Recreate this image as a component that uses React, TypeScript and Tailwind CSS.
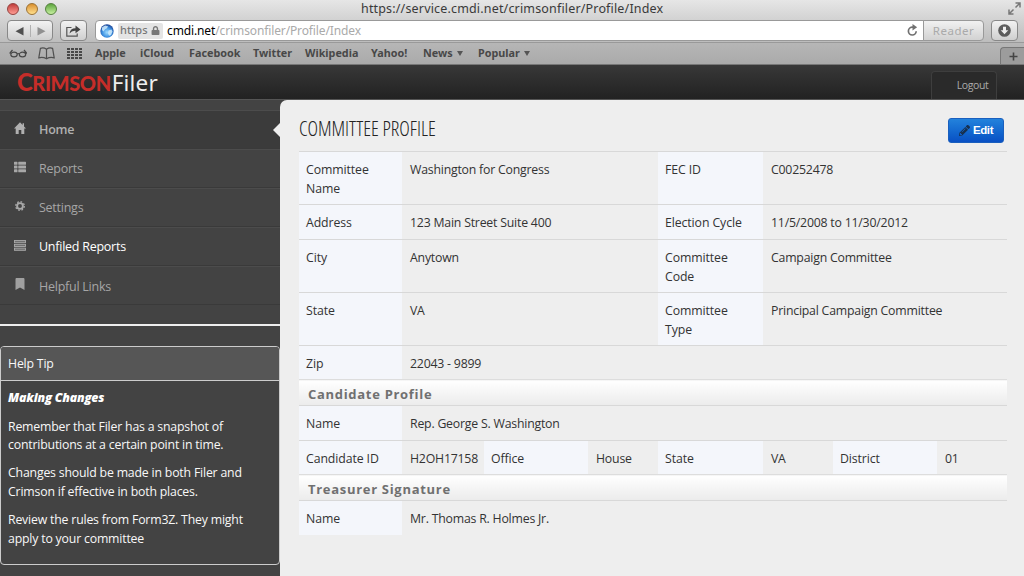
import type { ReactNode } from "react";
import { FaBookmark, FaLock, FaPencilAlt, FaThList } from "react-icons/fa";

const bookmarks = [
  { name: "Apple", width: "w-[45px]" },
  { name: "iCloud", width: "w-[49px]" },
  { name: "Facebook", width: "w-[64px]" },
  { name: "Twitter", width: "w-[52px]" },
  { name: "Wikipedia", width: "w-[66px]" },
  { name: "Yahoo!", width: "w-[52px]" },
  { name: "News", width: "w-[55px]", menu: true },
  { name: "Popular", width: "w-[60px]", menu: true },
];

const tips = [
  ["Remember that Filer has a snapshot of", "contributions at a certain point in time."],
  ["Changes should be made in both Filer and", "Crimson if effective in both places."],
  ["Review the rules from Form3Z. They might", "apply to your committee"],
];

function GlassesIcon() {
  return (
    <svg width="19" height="11" viewBox="0 0 19 11" fill="none" stroke="#484848" strokeWidth="1.2">
      <ellipse cx="5" cy="6.5" rx="3.2" ry="2.3" />
      <ellipse cx="13.500" cy="6.5" rx="3.2" ry="2.3" />
      <path d="M8.1 6q1.100-1 2.300 0M.5 5.200h2M16 5.200h2M1 5l2.500-3M17.500 5L15 2" />
    </svg>
  );
}

function BookIcon() {
  return (
    <svg width="17" height="13" viewBox="0 0 17 13" fill="none" stroke="#505050" strokeWidth="1.2">
      <path d="M8.5 2.2Q5.5.2 2.4 1.4L.8 10.8q4.2-1 7.7 1 3.5-2 7.7-1L14.6 1.4Q11.500.2 8.500 2.200V11.500" />
    </svg>
  );
}

function GridIcon() {
  return (
    <svg width="15" height="12" viewBox="0 0 15 12" fill="#484848">
      {[0, 3, 6, 9].map((y) =>
        [0, 4, 8, 12].map((x) => <rect key={`${x}-${y}`} x={x} y={y} width="3" height="2" />)
      )}
    </svg>
  );
}

function ShareIcon() {
  return (
    <svg width="15" height="12" viewBox="0 0 15 12" fill="none" stroke="#555" strokeWidth="1.2">
      <path d="M5.500 2.500H.8v8.700h10.400V8.500" />
      <path d="M3.500 8.500Q4.200 3.200 9.500 3.200V.5l5 4-5 3.800V5.800Q5.800 5.500 3.500 8.500z" fill="#444" stroke="none" />
    </svg>
  );
}

function Globe() {
  return (
    <svg width="14" height="14" viewBox="0 0 14 14">
      <defs>
        <radialGradient id="globe" cx="0.5" cy="0.6" r="0.6">
          <stop offset="0" stopColor="#9fdcff" />
          <stop offset="0.6" stopColor="#3b8fe0" />
          <stop offset="1" stopColor="#1b3f90" />
        </radialGradient>
      </defs>
      <circle cx="7" cy="7" r="6.7" fill="url(#globe)" />
      <path d="M2 3.500l3-2 3 .8-1 2-2 1-1.500 2.200L2 6zM8.500 6.500l3-1 1 2-1.500 3.500-2 .8-1-2.500z" fill="#d8f0fc" opacity=".8" />
    </svg>
  );
}

function ReloadIcon() {
  return (
    <svg width="11" height="13" viewBox="0 0 11 13" fill="none" stroke="#707070" strokeWidth="1.7">
      <path d="M6.500 3.200H5a3.900 3.900 0 1 0 4.200 4.100" />
      <path d="M5.500 0l4.600 3.200-4.600 3.300z" fill="#707070" stroke="none" />
    </svg>
  );
}

function FullscreenIcon() {
  return (
    <svg width="13" height="13" viewBox="0 0 13 13" fill="none" stroke="#777" strokeWidth="1.5">
      <path d="M7.500 1H12v4.500M12 1L7.500 5.500M5.500 12H1V7.500M1 12l4.500-4.500" />
    </svg>
  );
}

function HomeIcon() {
  return (
    <svg width="12" height="12" viewBox="0 0 12 12" fill="#b0b0b0">
      <path d="M6 .3L0 6.500h1.700V12h3V8h2.600v4h3V6.500H12L10 4.400V1.200H8.600V3z" />
    </svg>
  );
}

function GearIcon() {
  return (
    <svg width="10" height="10" viewBox="0 0 10 10" fill="none" stroke="#a8a8a8">
      <circle cx="5" cy="5" r="2.900" strokeWidth="1.900" />
      <circle cx="5" cy="5" r="4.300" strokeWidth="1.300" strokeDasharray="1.700 1.677" />
    </svg>
  );
}

function TasksIcon() {
  return (
    <svg width="12" height="11" viewBox="0 0 12 11" fill="#707070" stroke="#aaa" strokeWidth=".9">
      <rect x=".5" y=".5" width="11" height="2.200" />
      <rect x=".5" y="4.300" width="11" height="2.200" />
      <rect x=".5" y="8.100" width="11" height="2.200" />
    </svg>
  );
}

function Browser() {
  return (
    <header className="h-[65px] overflow-hidden border-b border-[#777] bg-linear-to-b from-[#e6e6e6] via-[#c6c6c6] to-[#a9a9a9] font-['Noto_Sans',sans-serif]">
      <div className="relative flex h-[19px] items-center">
        <div className="flex gap-[7px] pl-[7px] pb-[2px]">
          <span className="h-3 w-3 rounded-full border border-[#94423f] bg-linear-to-b from-[#c03c3c] to-[#ff9c94]" />
          <span className="h-3 w-3 rounded-full border border-[#9b7134] bg-linear-to-b from-[#d9902c] to-[#ffe08c]" />
          <span className="h-3 w-3 rounded-full border border-[#55803f] bg-linear-to-b from-[#5da63d] to-[#c6f0a0]" />
        </div>
        <h1 className="absolute left-[361px] top-0 whitespace-nowrap text-[12.5px] leading-[17px] tracking-[0.17px] text-[#3a3a3a]">
          https://service.cmdi.net/crimsonfiler/Profile/Index
        </h1>
        <span className="absolute top-[2px] right-[3px]">
          <FullscreenIcon />
        </span>
      </div>

      <div className="flex h-[23px] items-center pl-[7px]">
        <div className="flex h-[21px] w-[46px] items-center rounded-[4px] border border-[#888] bg-linear-to-b from-[#f2f2f2] to-[#cfcfcf]">
          <svg width="44" height="18" viewBox="0 0 44 18">
            <path d="M15.500 5v8.500L7.500 9.200z" fill="#505050" />
            <path d="M29.500 5v8.500L37.500 9.200z" fill="#909090" />
            <path d="M22.500 3v12" stroke="#b0b0b0" />
          </svg>
        </div>
        <div className="ml-[7px] flex h-[21px] w-[27px] items-center justify-center rounded-[4px] border border-[#888] bg-linear-to-b from-[#f2f2f2] to-[#cfcfcf]">
          <ShareIcon />
        </div>
        <div className="ml-2 flex h-[21px] w-[829px] items-center rounded-l-[4px] border border-[#999] bg-white pl-1 text-[12px]">
          <Globe />
          <span className="ml-[4px] flex h-4 w-[45px] items-center gap-[2px] rounded-[2px] bg-[#e4e4e4] pl-[2px] text-[11px] font-medium text-[#777]">
            <span className="w-[29px]">https</span>
            <FaLock size={9} color="#777" />
          </span>
          <span className="ml-[4px] text-[12px] tracking-[-0.12px] text-[#aaa]">
            <span className="text-black">cmdi.net</span>/crimsonfiler/Profile/Index
          </span>
          <span className="ml-auto mr-[5px]">
            <ReloadIcon />
          </span>
        </div>
        <div className="-ml-px flex h-[21px] w-[61px] items-center justify-center rounded-r-[4px] border border-[#999] bg-linear-to-b from-[#f1f1f1] to-[#d2d2d2] text-[11.500px] tracking-[0.5px] text-[#aaa]">
          Reader
        </div>
        <div className="ml-[7px] flex h-[21px] w-[27px] items-center justify-center rounded-[4px] border border-[#888] bg-linear-to-b from-[#f2f2f2] to-[#cfcfcf]">
          <svg width="13" height="13" viewBox="0 0 13 13">
            <circle cx="6.500" cy="6.500" r="6.300" fill="#5c5c5c" />
            <path d="M5 2.800h3v3.400h2.300L6.500 10.200 2.700 6.200H5z" fill="#eee" />
          </svg>
        </div>
      </div>

      <div className="flex h-[22px] items-center border-t border-[#999] bg-linear-to-b from-[#b6b6b6] to-[#aaa] pl-[9px]">
        <span className="w-[29px]"><GlassesIcon /></span>
        <span className="w-[29px]"><BookIcon /></span>
        <span className="w-[28px]"><GridIcon /></span>
        {bookmarks.map((b) => (
          <span key={b.name} className={`flex items-center gap-[4px] whitespace-nowrap text-[10.8px] font-bold text-[#484848] ${b.width}`}>
            {b.name}
            {b.menu && <span className="border-x-[3.5px] border-t-[5px] border-x-transparent border-t-[#555]" />}
          </span>
        ))}
        <span className="ml-auto flex h-[17px] w-[24px] items-center justify-center self-end rounded-tl-[4px] border-t border-l border-[#777] bg-[#9c9c9c] pl-[2px]">
          <svg width="9" height="9" viewBox="0 0 9 9" stroke="#444" strokeWidth="1.600">
            <path d="M4.500 .5v8M.5 4.500h8" />
          </svg>
        </span>
      </div>
    </header>
  );
}

function NavItem({ icon, label, className = "text-[#a6a6a6]" }: { icon: ReactNode; label: string; className?: string }) {
  return (
    <li className={`relative flex h-[39.1px] items-center border-t border-t-[#4c4c4c] border-b border-b-[#3a3a3a] pt-[2px] text-[12.500px] font-medium ${className}`}>
      <span className="flex w-[39px] justify-center pr-px pb-[5px] pl-[2px]">{icon}</span>
      <span className="tracking-[-0.25px]">{label}</span>
    </li>
  );
}

function Sidebar() {
  return (
    <aside className="w-[280px] shrink-0 pt-[10px]">
      <ul>
        <NavItem
          icon={<HomeIcon />}
          label="Home"
          className="bg-[#3b3b3b] font-semibold text-[#b0b0b0] after:absolute after:right-0 after:top-[12px] after:border-y-[7px] after:border-r-[7px] after:border-y-transparent after:border-r-[#eee]"
        />
        <NavItem icon={<FaThList size={12} color="#a8a8a8" />} label="Reports" />
        <NavItem icon={<GearIcon />} label="Settings" />
        <NavItem icon={<TasksIcon />} label="Unfiled Reports" className="text-white" />
        <NavItem icon={<FaBookmark size={12} color="#a0a0a0" />} label="Helpful Links" />
      </ul>
      <hr className="mt-[19px] border-t-2 border-[#eee]" />

      <section className="mt-[20px] h-[219px] rounded-[4px] border border-[#ccc] text-[12.3px] tracking-[-0.19px] text-[#f8f8f8]">
        <h2 className="flex h-[34px] items-center rounded-t-[3px] border-b border-[#ccc] bg-[#565656] pl-[7px] font-medium">
          Help Tip
        </h2>
        <div className="pl-[7px] pt-[8px] leading-[18.6px]">
          <h3 className="font-extrabold italic text-white">Making Changes</h3>
          {tips.map(([first, second]) => (
            <p key={first} className="mt-[9.500px] whitespace-nowrap font-medium">
              {first}
              <br />
              {second}
            </p>
          ))}
        </div>
      </section>
    </aside>
  );
}

function Label({ children }: { children: ReactNode }) {
  return <th className="bg-[#f4f6fb] px-[7px] pt-[9px] text-left align-top font-normal tracking-[-0.1px]">{children}</th>;
}

function Value({ children, span }: { children?: ReactNode; span?: number }) {
  return (
    <td colSpan={span} className="whitespace-nowrap pl-2 pt-[9px] align-top tracking-[-0.21px]">
      {children}
    </td>
  );
}

function SectionRow({ title }: { title: string }) {
  return (
    <tr className="h-[26px] border-t border-[#ddd]">
      <th
        colSpan={8}
        className="bg-linear-to-b from-white to-[#ebebeb] p-0 pt-px pl-[9px] text-left text-[13px] leading-[24px] font-bold tracking-[0.7px] text-[#707070]"
      >
        <span className="relative top-px">{title}</span>
      </th>
    </tr>
  );
}

function Profile() {
  return (
    <main className="relative grow rounded-tl-[7px] bg-[#eee] pl-[19px]">
      <div className="flex h-[51px] items-start justify-between pr-[20px]">
        <h2 className="pt-[15px] text-[20px] leading-[28px] font-light whitespace-nowrap text-[#222] [font-stretch:75%]">
          COMMITTEE PROFILE
        </h2>
        <button className="mt-[18px] flex h-[25px] w-[56px] items-center justify-center gap-[3px] rounded-[3px] border border-[#1a5fbe] bg-linear-to-b from-[#2382dc] to-[#0a50c4] font-['Liberation_Sans',sans-serif] text-[11.500px] font-bold tracking-[-0.4px] text-white">
          <FaPencilAlt size={11} color="#17304f" />
          Edit
        </button>
      </div>

      <table className="w-[708px] table-fixed border-collapse text-[12.3px] leading-[18.500px] text-[#333]">
        <colgroup>
          <col className="w-[103px]" />
          <col className="w-[82px]" />
          <col className="w-[104px]" />
          <col className="w-[70px]" />
          <col className="w-[105px]" />
          <col className="w-[70px]" />
          <col className="w-[104px]" />
          <col className="w-[70px]" />
        </colgroup>
        <tbody>
          <tr className="h-[53px] border-t border-[#d8d8d8]">
            <Label>Committee Name</Label>
            <Value span={3}>Washington for Congress</Value>
            <Label>FEC ID</Label>
            <Value span={3}>C00252478</Value>
          </tr>
          <tr className="h-[35px] border-t border-[#d8d8d8]">
            <Label>Address</Label>
            <Value span={3}>123 Main Street Suite 400</Value>
            <Label>Election Cycle</Label>
            <Value span={3}>11/5/2008 to 11/30/2012</Value>
          </tr>
          <tr className="h-[53px] border-t border-[#d8d8d8]">
            <Label>City</Label>
            <Value span={3}>Anytown</Value>
            <Label>Committee Code</Label>
            <Value span={3}>Campaign Committee</Value>
          </tr>
          <tr className="h-[53px] border-t border-[#d8d8d8]">
            <Label>State</Label>
            <Value span={3}>VA</Value>
            <Label>Committee Type</Label>
            <Value span={3}>Principal Campaign Committee</Value>
          </tr>
          <tr className="h-[34px] border-t border-[#d8d8d8]">
            <Label>Zip</Label>
            <Value span={7}>22043 - 9899</Value>
          </tr>
          <SectionRow title="Candidate Profile" />
          <tr className="h-[35px] border-t border-[#d8d8d8]">
            <Label>Name</Label>
            <Value span={7}>Rep. George S. Washington</Value>
          </tr>
          <tr className="h-[34px] border-t border-[#d8d8d8]">
            <Label>Candidate ID</Label>
            <Value>H2OH17158</Value>
            <Label>Office</Label>
            <Value>House</Value>
            <Label>State</Label>
            <Value>VA</Value>
            <Label>District</Label>
            <Value>01</Value>
          </tr>
          <SectionRow title="Treasurer Signature" />
          <tr className="h-[34px] border-t border-[#d8d8d8]">
            <Label>Name</Label>
            <Value span={7}>Mr. Thomas R. Holmes Jr.</Value>
          </tr>
        </tbody>
      </table>
    </main>
  );
}

export default function App() {
  return (
    <div className="flex h-[576px] w-[1024px] flex-col overflow-hidden bg-[#434343] font-['Open_Sans',sans-serif]">
      <Browser />
      <div className="flex h-[34px] shrink-0 items-start bg-linear-to-b from-[#383838] to-[#222]">
        <div className="flex items-baseline pl-[17px] leading-[34px]">
          <span className="font-['Lato',sans-serif] text-[24px] font-black tracking-[-0.5px] text-[#c52d29]">C</span>
          <span className="font-['Lato',sans-serif] text-[20px] font-black tracking-[-0.4px] text-[#c52d29]">RIMSON</span>
          <span className="ml-[1px] font-['Noto_Sans',sans-serif] text-[22.500px] tracking-[0.2px] text-[#eee]">Filer</span>
        </div>
        <button className="mt-[6px] mr-[27px] ml-auto h-[28px] w-[66px] rounded-t-[4px] border border-b-0 border-[#3e3e3e] bg-[#2a2a2a] pl-[15px] text-[10.500px] tracking-[-0.4px] text-[#aaa]">
          <span className="pl-[2px]">Logout</span>
        </button>
      </div>
      <div className="flex grow border-t border-[#555]">
        <Sidebar />
        <Profile />
      </div>
    </div>
  );
}
